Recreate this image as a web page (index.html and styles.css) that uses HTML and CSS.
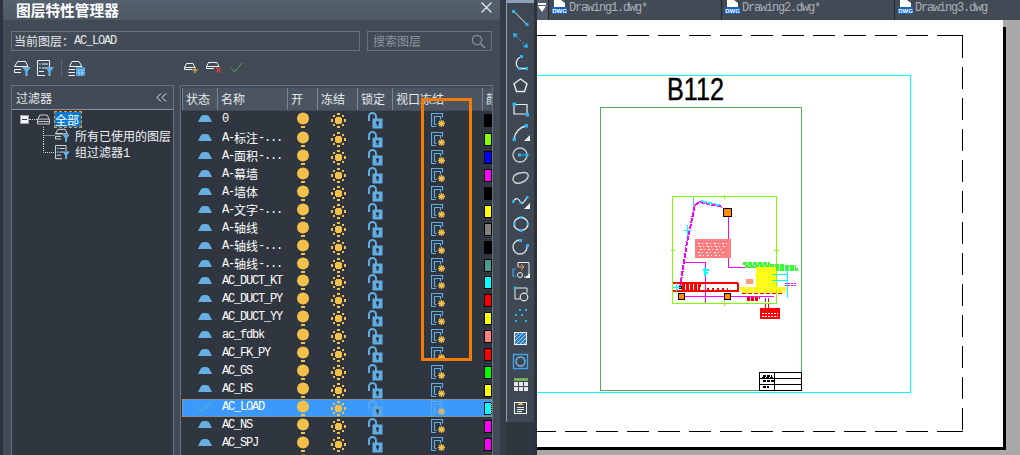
FILE: index.html
```html
<!DOCTYPE html>
<html lang="zh-CN">
<head>
<meta charset="utf-8">
<title>图层特性管理器</title>
<link rel="stylesheet" href="styles.css">
</head>
<body>
<svg class="defs" width="0" height="0" aria-hidden="true">
  <symbol id="dome" viewBox="0 0 16 9"><path d="M1 8 L3 4 Q4 1 7 1 H9 Q12 1 13 4 L15 8Z" fill="#67aee3"/></symbol>
  <symbol id="bulb" viewBox="0 0 14 17"><circle cx="7" cy="6.500" r="6" fill="#f3c04c"/><rect x="5" y="14" width="4" height="2" fill="#f3c04c"/></symbol>
  <symbol id="sun" viewBox="0 0 15 15" shape-rendering="crispEdges"><g fill="#f3c04c"><rect x="5" y="4" width="5" height="7"/><rect x="4" y="5" width="7" height="5"/><rect x="6" y="0" width="3" height="2"/><rect x="6" y="13" width="3" height="2"/><rect x="0" y="6" width="2" height="3"/><rect x="13" y="6" width="2" height="3"/><rect x="2" y="2" width="2" height="2"/><rect x="11" y="2" width="2" height="2"/><rect x="2" y="11" width="2" height="2"/><rect x="11" y="11" width="2" height="2"/></g></symbol>
  <symbol id="lock" viewBox="0 0 15 17"><path d="M1 9 V4.500 A3.500 3.500 0 0 1 8 4.500 V7" fill="none" stroke="#62aee2" stroke-width="2"/><rect x="4.500" y="6.500" width="10" height="10" fill="#62aee2"/><circle cx="9.500" cy="10.500" r="1.600" fill="#2f3640"/><rect x="8.800" y="11" width="1.500" height="3" fill="#2f3640"/></symbol>
  <symbol id="vp" viewBox="0 0 14 15"><path d="M.5 13.500 V.5 H11.500 V4.500 M.5 13.500 H5 M3.500 11.500 V3.500 H9.500 V6.500 M3.500 11.500 H5.500" fill="none" stroke="#62aee2" stroke-width="1.200"/><g stroke="#f3c04c" stroke-width="1.300"><path d="M10.500 7 V14 M7 10.500 H14 M8 8 L13 13 M13 8 L8 13"/></g></symbol>
  <symbol id="layer" viewBox="0 0 16 16"><path d="M3.500 2.500 H12.500 L15 7.500 H1Z M.5 7.500 V10.500 H15.500 V7.500 M.5 13.500 H15.500 V10.500 M.5 10.500 V13.500" fill="none" stroke="#f0f2f4" stroke-width="1"/></symbol>
  <symbol id="funnel" viewBox="0 0 8 8"><path d="M0 0 H8 L5 4 V8 H3 V4Z" fill="#67aee3"/></symbol>
  <symbol id="layerf" viewBox="0 0 17 17"><path d="M3.500 1.500 H11.500 L14 6.500 H.5Z M.5 6.500 H8 M.5 9.500 H7 M.5 9.500 V12.500 H7" fill="none" stroke="#f0f2f4"/><use href="#funnel" x="8" y="7" width="9" height="9"/></symbol>
  <symbol id="docf" viewBox="0 0 17 17"><path d="M.5 .5 H12.500 V7 M.5 .5 V15.500 H8" fill="none" stroke="#f0f2f4"/><g fill="#4aa3e8"><rect x="2" y="3" width="2" height="2"/><rect x="2" y="7" width="2" height="2"/></g><path d="M5 4 H11 M5 8 H9 M2 11.500 H7" stroke="#f0f2f4"/><use href="#funnel" x="8" y="7" width="9" height="9"/></symbol>
</svg>

<div class="app">
  <div class="edge"></div>

  <section class="panel">
    <header class="titlebar">
      <h1 class="title">图层特性管理器</h1>
      <svg class="close" width="11" height="11" viewBox="0 0 11 11"><path d="M.5 .5 L10.500 10.500 M10.500 .5 L.5 10.500" stroke="#e8ecef" stroke-width="1.200"/></svg>
    </header>

    <div class="fields">
      <div class="field current">当前图层：<span class="mono">AC_LOAD</span></div>
      <div class="field search">
        <span>搜索图层</span>
        <svg width="15" height="15" viewBox="0 0 15 15"><circle cx="6" cy="6" r="4.700" fill="none" stroke="#7f93a6" stroke-width="1.200"/><path d="M9.500 9.500 L14 14" stroke="#8a96a2" stroke-width="1.500"/></svg>
      </div>
    </div>

    <div class="actions">
      <div class="act-left">
        <svg width="17" height="17"><use href="#layerf"/></svg>
        <svg class="a2" width="17" height="17"><use href="#docf"/></svg>
        <span class="act-sep"></span>
        <svg width="17" height="17" viewBox="0 0 17 17"><path d="M4 1.500 H11 L14 6.500 H1.500Z M.5 9.500 H7 M.5 12.500 H7 M.5 15.500 H7" fill="none" stroke="#f0f2f4"/><rect x="8" y="7" width="9" height="9" fill="#3f96dc"/><path d="M8 10 H17 M8 13 H17 M11 10 V16 M14 10 V16" stroke="#c8e2f6" stroke-width=".7"/></svg>
      </div>
      <div class="act-right">
        <svg width="15" height="11" viewBox="0 0 15 11"><path d="M2.500 1.500 H9 L11 5.500 H.5Z M.5 5.500 V7.500 H8" fill="none" stroke="#f0f2f4"/><path d="M11 5 V11 M8 8 H14" stroke="#e9b949" stroke-width="1.200"/></svg>
        <svg width="17" height="12" viewBox="0 0 17 12"><path d="M2.500 1.500 H11 L13 5.500 H.5Z M.5 5.500 V7.500 H8" fill="none" stroke="#f0f2f4"/><path d="M10 6.500 L15 11.500 M15 6.500 L10 11.500" stroke="#d9433c" stroke-width="1.200"/></svg>
        <svg width="13" height="11" viewBox="0 0 13 11"><path d="M.5 5.500 L4.500 10 L12.500 .5" fill="none" stroke="#4caf50" stroke-width="1"/></svg>
      </div>
    </div>

    <div class="main">
      <aside class="filters">
        <div class="filters-head"><span>过滤器</span>
          <svg width="11" height="9" viewBox="0 0 11 9"><path d="M5 .5 L1 4.500 L5 8.500 M10 .5 L6 4.500 L10 8.500" fill="none" stroke="#e6e9ec"/></svg>
        </div>
        <div class="tree">
          <div class="tree-root">
            <span class="minus"></span><span class="dots"></span>
            <svg width="13" height="13" viewBox="0 0 16 16"><use href="#layer"/></svg>
            <span class="tree-sel">全部</span>
          </div>
          <div class="tree-row">
            <svg class="conn" width="12" height="17" viewBox="0 0 12 17"><path d="M.5 0 V17 M.5 8.500 H12" stroke="#d8dde2" stroke-dasharray="1 1"/></svg>
            <svg width="15" height="15"><use href="#layerf"/></svg><span class="tree-label">所有已使用的图层</span>
          </div>
          <div class="tree-row">
            <svg class="conn" width="12" height="17" viewBox="0 0 12 17"><path d="M.5 0 V8.500 H12" fill="none" stroke="#d8dde2" stroke-dasharray="1 1"/></svg>
            <svg width="15" height="15"><use href="#docf"/></svg><span class="tree-label">组过滤器<span class="mono">1</span></span>
          </div>
        </div>
      </aside>

      <div class="list">
        <div class="row head">
          <div class="h">状态</div><div class="h">名称</div><div class="h">开</div><div class="h">冻结</div><div class="h">锁定</div><div class="h">视口冻结</div><div class="h">颜</div>
        </div>
        <div class="row"><div class="c st"><svg width="16" height="9"><use href="#dome"/></svg></div><div class="c nm">0</div><div class="c mid"><svg width="14" height="17"><use href="#bulb"/></svg></div><div class="c mid"><svg width="15" height="15"><use href="#sun"/></svg></div><div class="c mid"><svg width="15" height="17"><use href="#lock"/></svg></div><div class="c vp"><svg width="14" height="15"><use href="#vp"/></svg></div><div class="c sw"><span class="swatch black"></span></div></div>
        <div class="row"><div class="c st"><svg width="16" height="9"><use href="#dome"/></svg></div><div class="c nm">A-<span class="cn">标注</span>-...</div><div class="c mid"><svg width="14" height="17"><use href="#bulb"/></svg></div><div class="c mid"><svg width="15" height="15"><use href="#sun"/></svg></div><div class="c mid"><svg width="15" height="17"><use href="#lock"/></svg></div><div class="c vp"><svg width="14" height="15"><use href="#vp"/></svg></div><div class="c sw"><span class="swatch lime"></span></div></div>
        <div class="row"><div class="c st"><svg width="16" height="9"><use href="#dome"/></svg></div><div class="c nm">A-<span class="cn">面积</span>-...</div><div class="c mid"><svg width="14" height="17"><use href="#bulb"/></svg></div><div class="c mid"><svg width="15" height="15"><use href="#sun"/></svg></div><div class="c mid"><svg width="15" height="17"><use href="#lock"/></svg></div><div class="c vp"><svg width="14" height="15"><use href="#vp"/></svg></div><div class="c sw"><span class="swatch blue"></span></div></div>
        <div class="row"><div class="c st"><svg width="16" height="9"><use href="#dome"/></svg></div><div class="c nm">A-<span class="cn">幕墙</span></div><div class="c mid"><svg width="14" height="17"><use href="#bulb"/></svg></div><div class="c mid"><svg width="15" height="15"><use href="#sun"/></svg></div><div class="c mid"><svg width="15" height="17"><use href="#lock"/></svg></div><div class="c vp"><svg width="14" height="15"><use href="#vp"/></svg></div><div class="c sw"><span class="swatch magenta"></span></div></div>
        <div class="row"><div class="c st"><svg width="16" height="9"><use href="#dome"/></svg></div><div class="c nm">A-<span class="cn">墙体</span></div><div class="c mid"><svg width="14" height="17"><use href="#bulb"/></svg></div><div class="c mid"><svg width="15" height="15"><use href="#sun"/></svg></div><div class="c mid"><svg width="15" height="17"><use href="#lock"/></svg></div><div class="c vp"><svg width="14" height="15"><use href="#vp"/></svg></div><div class="c sw"><span class="swatch black"></span></div></div>
        <div class="row"><div class="c st"><svg width="16" height="9"><use href="#dome"/></svg></div><div class="c nm">A-<span class="cn">文字</span>-...</div><div class="c mid"><svg width="14" height="17"><use href="#bulb"/></svg></div><div class="c mid"><svg width="15" height="15"><use href="#sun"/></svg></div><div class="c mid"><svg width="15" height="17"><use href="#lock"/></svg></div><div class="c vp"><svg width="14" height="15"><use href="#vp"/></svg></div><div class="c sw"><span class="swatch yellow"></span></div></div>
        <div class="row"><div class="c st"><svg width="16" height="9"><use href="#dome"/></svg></div><div class="c nm">A-<span class="cn">轴线</span></div><div class="c mid"><svg width="14" height="17"><use href="#bulb"/></svg></div><div class="c mid"><svg width="15" height="15"><use href="#sun"/></svg></div><div class="c mid"><svg width="15" height="17"><use href="#lock"/></svg></div><div class="c vp"><svg width="14" height="15"><use href="#vp"/></svg></div><div class="c sw"><span class="swatch gray"></span></div></div>
        <div class="row"><div class="c st"><svg width="16" height="9"><use href="#dome"/></svg></div><div class="c nm">A-<span class="cn">轴线</span>-...</div><div class="c mid"><svg width="14" height="17"><use href="#bulb"/></svg></div><div class="c mid"><svg width="15" height="15"><use href="#sun"/></svg></div><div class="c mid"><svg width="15" height="17"><use href="#lock"/></svg></div><div class="c vp"><svg width="14" height="15"><use href="#vp"/></svg></div><div class="c sw"><span class="swatch black"></span></div></div>
        <div class="row"><div class="c st"><svg width="16" height="9"><use href="#dome"/></svg></div><div class="c nm">A-<span class="cn">轴线</span>-...</div><div class="c mid"><svg width="14" height="17"><use href="#bulb"/></svg></div><div class="c mid"><svg width="15" height="15"><use href="#sun"/></svg></div><div class="c mid"><svg width="15" height="17"><use href="#lock"/></svg></div><div class="c vp"><svg width="14" height="15"><use href="#vp"/></svg></div><div class="c sw"><span class="swatch teal"></span></div></div>
        <div class="row"><div class="c st"><svg width="16" height="9"><use href="#dome"/></svg></div><div class="c nm">AC_DUCT_KT</div><div class="c mid"><svg width="14" height="17"><use href="#bulb"/></svg></div><div class="c mid"><svg width="15" height="15"><use href="#sun"/></svg></div><div class="c mid"><svg width="15" height="17"><use href="#lock"/></svg></div><div class="c vp"><svg width="14" height="15"><use href="#vp"/></svg></div><div class="c sw"><span class="swatch cyan"></span></div></div>
        <div class="row"><div class="c st"><svg width="16" height="9"><use href="#dome"/></svg></div><div class="c nm">AC_DUCT_PY</div><div class="c mid"><svg width="14" height="17"><use href="#bulb"/></svg></div><div class="c mid"><svg width="15" height="15"><use href="#sun"/></svg></div><div class="c mid"><svg width="15" height="17"><use href="#lock"/></svg></div><div class="c vp"><svg width="14" height="15"><use href="#vp"/></svg></div><div class="c sw"><span class="swatch red"></span></div></div>
        <div class="row"><div class="c st"><svg width="16" height="9"><use href="#dome"/></svg></div><div class="c nm">AC_DUCT_YY</div><div class="c mid"><svg width="14" height="17"><use href="#bulb"/></svg></div><div class="c mid"><svg width="15" height="15"><use href="#sun"/></svg></div><div class="c mid"><svg width="15" height="17"><use href="#lock"/></svg></div><div class="c vp"><svg width="14" height="15"><use href="#vp"/></svg></div><div class="c sw"><span class="swatch yellow"></span></div></div>
        <div class="row"><div class="c st"><svg width="16" height="9"><use href="#dome"/></svg></div><div class="c nm">ac_fdbk</div><div class="c mid"><svg width="14" height="17"><use href="#bulb"/></svg></div><div class="c mid"><svg width="15" height="15"><use href="#sun"/></svg></div><div class="c mid"><svg width="15" height="17"><use href="#lock"/></svg></div><div class="c vp"><svg width="14" height="15"><use href="#vp"/></svg></div><div class="c sw"><span class="swatch salmon"></span></div></div>
        <div class="row"><div class="c st"><svg width="16" height="9"><use href="#dome"/></svg></div><div class="c nm">AC_FK_PY</div><div class="c mid"><svg width="14" height="17"><use href="#bulb"/></svg></div><div class="c mid"><svg width="15" height="15"><use href="#sun"/></svg></div><div class="c mid"><svg width="15" height="17"><use href="#lock"/></svg></div><div class="c vp"><svg width="14" height="15"><use href="#vp"/></svg></div><div class="c sw"><span class="swatch red"></span></div></div>
        <div class="row"><div class="c st"><svg width="16" height="9"><use href="#dome"/></svg></div><div class="c nm">AC_GS</div><div class="c mid"><svg width="14" height="17"><use href="#bulb"/></svg></div><div class="c mid"><svg width="15" height="15"><use href="#sun"/></svg></div><div class="c mid"><svg width="15" height="17"><use href="#lock"/></svg></div><div class="c vp"><svg width="14" height="15"><use href="#vp"/></svg></div><div class="c sw"><span class="swatch green"></span></div></div>
        <div class="row"><div class="c st"><svg width="16" height="9"><use href="#dome"/></svg></div><div class="c nm">AC_HS</div><div class="c mid"><svg width="14" height="17"><use href="#bulb"/></svg></div><div class="c mid"><svg width="15" height="15"><use href="#sun"/></svg></div><div class="c mid"><svg width="15" height="17"><use href="#lock"/></svg></div><div class="c vp"><svg width="14" height="15"><use href="#vp"/></svg></div><div class="c sw"><span class="swatch yellow"></span></div></div>
        <div class="row selected"><div class="c st"><svg width="16" height="11" viewBox="0 0 16 11"><path d="M.5 6 L4.500 10.500 L14.500 .5" fill="none" stroke="#5fc08a"/></svg></div><div class="c nm">AC_LOAD</div><div class="c mid"><svg width="14" height="17"><use href="#bulb"/></svg></div><div class="c mid"><svg width="15" height="15"><use href="#sun"/></svg></div><div class="c mid"><svg class="faded" width="15" height="17"><use href="#lock"/></svg></div><div class="c vp"><svg class="faded" width="14" height="15"><use href="#vp"/></svg></div><div class="c sw"><span class="swatch cyan"></span></div></div>
        <div class="row"><div class="c st"><svg width="16" height="9"><use href="#dome"/></svg></div><div class="c nm">AC_NS</div><div class="c mid"><svg width="14" height="17"><use href="#bulb"/></svg></div><div class="c mid"><svg width="15" height="15"><use href="#sun"/></svg></div><div class="c mid"><svg width="15" height="17"><use href="#lock"/></svg></div><div class="c vp"><svg width="14" height="15"><use href="#vp"/></svg></div><div class="c sw"><span class="swatch magenta"></span></div></div>
        <div class="row"><div class="c st"><svg width="16" height="9"><use href="#dome"/></svg></div><div class="c nm">AC_SPJ</div><div class="c mid"><svg width="14" height="17"><use href="#bulb"/></svg></div><div class="c mid"><svg width="15" height="15"><use href="#sun"/></svg></div><div class="c mid"><svg width="15" height="17"><use href="#lock"/></svg></div><div class="c vp"><svg width="14" height="15"><use href="#vp"/></svg></div><div class="c sw"><span class="swatch magenta"></span></div></div>
        <div class="row"><div class="c st"></div><div class="c nm"></div><div class="c mid"><svg width="14" height="17"><use href="#bulb"/></svg></div><div class="c mid"><svg width="15" height="15"><use href="#sun"/></svg></div><div class="c mid"></div><div class="c vp"></div><div class="c sw"></div></div>
      </div>
    </div>
    <div class="highlight"></div>
  </section>

  <div class="gutter"></div>

  <div class="toolcol">
    <nav class="tools">
      <div class="tool"><svg width="22" height="22"><path d="M4 5.500 L17 18.500" stroke="#e8ecef"/><path d="M2 4h3v3h-3z M15.500 17h3v3h-3z" fill="#29b6f6"/></svg></div>
      <div class="tool"><svg width="22" height="22"><path d="M3 4 L18 19" stroke="#29b6f6" stroke-dasharray="2 2.500"/><path d="M3 4 L8 5 L4 9Z M18 19 L13 18 L17 14Z" fill="#29b6f6"/></svg></div>
      <div class="tool"><svg width="22" height="22"><path d="M11 5 A6.500 6.500 0 0 0 9 16.500 H16" fill="none" stroke="#e8ecef" stroke-width="1.300"/><path d="M10 3h3v3h-3z M8 15h3v3h-3z M15 15h3v3h-3z" fill="#29b6f6"/></svg></div>
      <div class="tool"><svg width="22" height="22"><path d="M10.500 4 L17 8.700 L14.500 16.500 H6.500 L4 8.700Z" fill="none" stroke="#e8ecef" stroke-width="1.400"/></svg></div>
      <div class="tool"><svg width="22" height="22"><path d="M4 6.500 H17 V16 H4 V6.500" fill="none" stroke="#e8ecef" stroke-width="1.200"/><path d="M2.500 4.500h3.500v3.500h-3.500z M15.500 15h3.500v3.500h-3.500z" fill="#29b6f6"/></svg></div>
      <div class="tool"><svg width="22" height="22"><path d="M4 18 C5 11 10 6 16 5" fill="none" stroke="#e8ecef" stroke-width="1.300"/><path d="M2.500 16.500h3.500v3.500h-3.500z M14.500 3h3.500v3.500h-3.500z" fill="#29b6f6"/><path d="M20 14 V20 H14Z" fill="#f0f2f4"/></svg></div>
      <div class="tool"><svg width="22" height="22"><circle cx="10" cy="11" r="7" fill="none" stroke="#c8ced4" stroke-width="1.300"/><path d="M10 11 H18" stroke="#29b6f6"/><path d="M8 9.500h3v3h-3z M15.500 9.500h3v3h-3z" fill="#29b6f6"/></svg></div>
      <div class="tool"><svg width="22" height="22"><path d="M3 12 C3 8 8 6 13 5.500 C17 5 19 7 18 10 C17 13 14 15 10 16 C6 17 3 15 3 12Z" fill="none" stroke="#c8ced4" stroke-width="1.500"/></svg></div>
      <div class="tool"><svg width="22" height="22"><path d="M3 12 C6 6 9 9 11 13 C13 15 16 8 18 7" fill="none" stroke="#e8ecef" stroke-width="1.200"/><path d="M2 10.500h2.500v2.500h-2.500z M9.500 11h2.500v2.500h-2.500z M16 6h2.500v2.500h-2.500z" fill="#29b6f6"/><path d="M20 13 V19 H14Z" fill="#f0f2f4"/></svg></div>
      <div class="tool"><svg width="22" height="22"><ellipse cx="11" cy="11" rx="7" ry="6.500" fill="none" stroke="#e8ecef" stroke-width="1.400"/><path d="M9.500 3h3v3h-3z M3 9.500h2.500v2.500h-2.500z M16.500 9.500h2.500v2.500h-2.500z M9.500 16h3v3h-3z" fill="#29b6f6"/></svg></div>
      <div class="tool"><svg width="22" height="22"><path d="M10 4 A7 7 0 1 0 17 11" fill="none" stroke="#d4d9de" stroke-width="1.400"/><path d="M9 3h3v3h-3z M16 8h3v3h-3z" fill="#29b6f6"/></svg></div>
      <div class="tool"><svg width="22" height="22"><path d="M8 8 V3.500 H19 V18 H14" fill="none" stroke="#e8ecef"/><path d="M3 10 H6 M3 10 V17 H6" fill="none" stroke="#3da5f0" stroke-width="1.200"/><path d="M8 8 H14 M11 5 L14 8 L11 11" fill="none" stroke="#e9a23b"/><circle cx="10" cy="16" r="2.500" fill="none" stroke="#e8ecef"/><path d="M20 14 V19 H15Z" fill="#f0f2f4"/></svg></div>
      <div class="tool"><svg width="22" height="22"><path d="M5 6 V17 H10 M5 6 H17 V11" fill="none" stroke="#e8ecef"/><path d="M3.500 4.500h2.500v2.500h-2.500z" fill="#29b6f6"/><circle cx="14" cy="15" r="3.800" fill="none" stroke="#e8ecef" stroke-width="1.200"/></svg></div>
      <div class="tool"><svg width="22" height="22"><path d="M9 4h2v2h-2z M5 9h2v2h-2z M11 9h2v2h-2z M5 15h2v2h-2z M15 15h2v2h-2z M15 4h2v2h-2z" fill="#29b6f6"/></svg></div>
      <div class="tool"><svg width="22" height="22"><rect x="5" y="5" width="12" height="12" fill="#2f7fc2"/><path d="M5 9 L9 5 M5 13 L13 5 M5 17 L17 5 M9 17 L17 9 M13 17 L17 13" stroke="#a9d3ef"/><rect x="4.500" y="4.500" width="12" height="12" fill="none" stroke="#f0f2f4"/></svg></div>
      <div class="tool"><svg width="22" height="22"><rect x="3.500" y="3.500" width="14" height="14" fill="none" stroke="#3da5f0" stroke-width="1.400"/><circle cx="10.500" cy="10.500" r="4.500" fill="none" stroke="#6cb8ee" stroke-width="1.400"/></svg></div>
      <div class="tool"><svg width="22" height="22" shape-rendering="crispEdges"><rect x="4" y="4" width="14" height="3" fill="#6fae5d"/><g fill="#e6e6e6"><rect x="4" y="8" width="4" height="4"/><rect x="9" y="8" width="4" height="4"/><rect x="14" y="8" width="4" height="4"/><rect x="4" y="13" width="4" height="4"/><rect x="9" y="13" width="4" height="4"/><rect x="14" y="13" width="4" height="4"/></g></svg></div>
      <div class="tool"><svg width="22" height="22"><rect x="4.500" y="5.500" width="12" height="11" fill="#3f4752" stroke="#f0f2f4"/><path d="M7 8 L10.500 5.500 L14 8Z" fill="#e9c24b"/><path d="M7 10.500 H14 M7 12.500 H14 M7 14.500 H12" stroke="#e8ecef"/></svg></div>
    </nav>
    <div class="tool-foot"></div>
  </div>

  <div class="edge2"></div>

  <main class="doc">
    <div class="tabs">
      <div class="tab-menu"><svg width="8" height="9" viewBox="0 0 8 9"><path d="M0 0 H8 V2 H0Z M0 3 H8 L4 9Z" fill="#fff"/></svg></div>
      <div class="tab"><svg width="15" height="15" viewBox="0 0 15 15"><path d="M2 0 H9 L13 3 V14 H2Z" fill="#fff"/><rect y="7" width="15" height="7" fill="#1565c0"/><text x="7.500" y="13" class="dwg">DWG</text></svg><span>Drawing1.dwg*</span></div>
      <div class="tab"><svg width="15" height="15" viewBox="0 0 15 15"><path d="M2 0 H9 L13 3 V14 H2Z" fill="#fff"/><rect y="7" width="15" height="7" fill="#1565c0"/><text x="7.500" y="13" class="dwg">DWG</text></svg><span>Drawing2.dwg*</span></div>
      <div class="tab"><svg width="15" height="15" viewBox="0 0 15 15"><path d="M2 0 H9 L13 3 V14 H2Z" fill="#fff"/><rect y="7" width="15" height="7" fill="#1565c0"/><text x="7.500" y="13" class="dwg">DWG</text></svg><span>Drawing3.dwg</span></div>
    </div>
    <svg class="sheet" width="483" height="435" viewBox="537 20 483 435">
      <rect x="537" y="20" width="483" height="435" fill="#a8a8a8"/>
      <rect x="537" y="20" width="466" height="427" fill="#fff"/>
      <path d="M1003 27 H1006 V450 H537 V447 H1003Z" fill="#000"/>
      <g fill="none" shape-rendering="crispEdges">
        <path d="M959 35.500 H537 M962 35.500 H959 M962.500 35 V36 M962.500 36 V430 M959 431.500 H537 M963 431.500 H959" stroke="#000" stroke-dasharray="22 9"/>
        <path d="M537 75.500 H910.500 V392.500 H537" stroke="#00ffff"/>
        <rect x="600.500" y="107.500" width="201" height="283" stroke="#54b058"/>
        <rect x="759.500" y="372.500" width="42" height="18" stroke="#000"/>
        <path d="M759 378.500 H801 M759 384.500 H801 M774.500 372 V390" stroke="#000"/>
        <path d="M763 375.500 H772 M762 378 H773 M763 381 H775 M763 387 H769" stroke="#000" stroke-width="2" stroke-dasharray="3 1"/>
      </g>
      <text class="heading" x="667" y="100" textLength="57" lengthAdjust="spacingAndGlyphs">B112</text>

      <g fill="none" shape-rendering="crispEdges">
        <rect x="672.500" y="196.500" width="104" height="107" stroke="#80ff00"/>
        <path d="M724 195 V199 M724 301 V306 M671 250 H675 M774 250 H779" stroke="#80ff00"/>
        <path d="M694 197 L693 212" stroke="#66bbee"/>
        <path d="M680 288 L687 242 L695 205 L700 202 L723 207" stroke="#ff00ff" stroke-width="2" stroke-dasharray="5 1"/>
        <path d="M701 201 L722 206" stroke="#00ffff" stroke-width="2" stroke-dasharray="5 2"/>
        <path d="M728.500 217 V267 H757" stroke="#ff00ff"/>
        <rect x="695" y="239" width="36" height="19" fill="#ff8080"/>
        <path d="M698 243 H728 M699 246 H727 M700 249 H724 M698 252 H726 M699 255 H720" stroke="#fff" stroke-dasharray="2 2 1 3"/>
        <path d="M683 262.500 H705.500 V303" stroke="#ff00ff"/>
        <path d="M703 270 H709 M704 273 H708 M705 268 V276" stroke="#00ffff" stroke-width="2"/>
        <path d="M687 225 V236 M684 230 H691" stroke="#00ffff"/>
        <path d="M673 283 H738 M673 291 H738 M737.500 283 V292" stroke="#ff0000" stroke-width="2"/>
        <path d="M682 285.500 H702 M682 288 H700" stroke="#ff0000" stroke-width="3" stroke-dasharray="3 1"/>
        <path d="M707 289 H728" stroke="#ff0000" stroke-width="2" stroke-dasharray="2 3"/>
        <rect x="679" y="286" width="3" height="3" fill="#000"/>
        <path d="M680 296.500 H774 " stroke="#ff00ff"/>
        <path d="M673 287 H681 M676 283 V293" stroke="#00ffff"/>
        <rect x="678.500" y="293.500" width="6" height="6" fill="#ff8c00" stroke="#000"/>
        <rect x="724.500" y="293.500" width="6" height="6" fill="#ff8c00" stroke="#000"/>
        <rect x="723.500" y="208.500" width="8" height="8" fill="#ff8c00" stroke="#000"/>
        <path d="M743 263 H770 M770 265 H785 M745 266 H796 M775 269 H798" stroke="#33ff33" stroke-width="3" stroke-dasharray="4 1"/>
        <rect x="756" y="267" width="20" height="22" fill="#ffff00"/>
        <path d="M758 270 H774 M758 274 H774 M758 278 H774 M758 282 H774 M758 286 H774" stroke="#fff" stroke-dasharray="1 3"/>
        <path d="M740 288 H786 M742 291 H785" stroke="#ffff00" stroke-width="3" stroke-dasharray="6 1"/>
        <rect x="746" y="279" width="7" height="5" fill="#ff9a80"/>
        <path d="M787.500 268 V298" stroke="#00ffff"/>
        <path d="M772 274 H787 M772 280 H787" stroke="#00ffff"/>
        <path d="M785 283 H797 M785 285 H796" stroke="#ff00ff" stroke-dasharray="2 1"/>
        <path d="M747 298 H760 M747 300 H759" stroke="#ff0000" stroke-width="2" stroke-dasharray="3 1"/>
        <path d="M765.500 298 V308 M768.500 298 V308 M742 293 H782" stroke="#ff0000" stroke-dasharray="4 2"/>
        <rect x="760" y="308" width="20" height="11" fill="#ff0000"/>
        <path d="M762 313 H778 M762 316 H778" stroke="#fff" stroke-dasharray="2 1"/>
      </g>
    </svg>
  </main>
</div>
</body>
</html>
```

FILE: styles.css
```css
* { box-sizing: border-box; }
html, body { margin: 0; height: 100%; overflow: hidden; }
body { background: #2f3640; font-family: "Noto Sans CJK SC", "Liberation Sans", sans-serif; font-size: 12px; color: #eef1f3; }
svg { display: block; flex: none; }
.defs { position: absolute; }
.mono { font-family: "Liberation Mono", "Noto Sans CJK SC", monospace; font-size: 12px; letter-spacing: -1.200px; }

.app { display: flex; width: 1020px; height: 455px; overflow: hidden; }
.edge { width: 3px; background: #2c333c; }

.panel { position: relative; width: 497px; background: #414a55; display: flex; flex-direction: column; }
.titlebar { height: 20px; display: flex; align-items: center; justify-content: space-between; padding: 0 8px 0 13px; background: linear-gradient(#56626f, #4d5864); }
.title { margin: 0; font-size: 14.700px; line-height: 20px; font-weight: 700; color: #fff; }
.close { position: relative; top: -3px; }

.fields { display: flex; gap: 7px; padding: 11px 8px 0 8px; }
.field { height: 20px; border: 1px solid #68727c; line-height: 16px; display: flex; align-items: center; white-space: pre; }
.current { width: 349px; padding-left: 2px; color: #e6e9ec; }
.search { width: 125px; padding: 0 5px; justify-content: space-between; color: #8b939b; }

.actions { height: 34px; display: flex; align-items: center; padding-left: 11px; }
.act-left { display: flex; align-items: center; width: 170px; }
.a2 { margin-left: 6px; }
.act-sep { width: 1px; height: 18px; background: #1f252c; border-right: 1px solid #5a6470; margin: 0 6px 0 7px; }
.act-right { display: flex; align-items: center; gap: 7px; position: relative; top: -1px; }

.main { flex: 1; min-height: 0; display: flex; gap: 6px; padding-left: 8px; }
.filters { width: 163px; height: 400px; border: 1px solid #68727c; background: #2f3640; }
.filters-head { height: 24px; background: #414a55; border-bottom: 1px solid #8b949c; display: flex; align-items: center; justify-content: space-between; padding: 0 6px 0 4px; color: #e6e9ec; }
.tree { padding: 1px 0 0 8px; }
.tree-root { height: 16px; display: flex; align-items: center; }
.minus { width: 9px; height: 9px; background: linear-gradient(#2f3640, #2f3640) center / 5px 1px no-repeat #f4f5f6; border: 1px solid #9aa0a6; }
.dots { width: 8px; border-top: 1px dotted #d8dde2; }
.tree-root svg { margin-right: 5px; }
.tree-sel { background: #0a78d4; color: #fff; outline: 1px dashed #f59a23; width: 26px; line-height: 15px; height: 15px; }
.tree-row { height: 17px; display: flex; align-items: center; padding-left: 23px; }
.tree-label { margin-left: 5px; color: #eef1f3; line-height: 17px; white-space: nowrap; }

.list { width: 313px; height: 372px; border: 1px solid #68727c; border-bottom: 0; padding-left: 1px; background: #2f3640; overflow: hidden; }
.row { display: grid; grid-template-columns: 35px 70px 30px 40px 35px 90px 10px; height: 18px; }
.head { height: 25px; padding-top: 1px; background: #414a55; border-top: 1px solid #414a55; }
.h { padding-left: 3px; line-height: 22px; height: 22px; border-left: 1px solid #7d868e; background: #4a5561; color: #e6e9ec; white-space: nowrap; overflow: hidden; }
.c { display: flex; align-items: center; min-width: 0; }
.st { padding: 0 0 3px 15px; }
.nm { padding: 0 0 3px 5px; font-family: "Liberation Mono", "Noto Sans CJK SC", monospace; font-size: 12px; letter-spacing: -1.200px; color: #fff; white-space: pre; }
.cn { font-family: "Noto Sans CJK SC", sans-serif; font-size: 12px; letter-spacing: 0; }
.mid { justify-content: center; }
.row .c:nth-child(3), .row .c:nth-child(4) { padding-left: 2px; }
.row .c:nth-child(5) { padding-left: 1px; }
.vp { padding-left: 39px; }
.sw { padding-left: 2px; }
.swatch { display: block; flex: none; width: 8px; height: 13px; border: 1px solid #000; }
.black { background: #000; }
.lime { background: #80ff00; }
.blue { background: #0000ff; }
.magenta { background: #ff00ff; }
.yellow { background: #ffff00; }
.gray { background: #808080; }
.teal { background: #4c9a8f; }
.cyan { background: #00ffff; }
.red { background: #ff0000; }
.salmon { background: #ff7f7f; }
.green { background: #00ff00; }
.selected { background: #3b99fc; outline: 1px dotted #c98a3a; outline-offset: -1px; }
.faded { opacity: .85; }

.highlight { position: absolute; left: 418px; top: 98px; width: 51px; height: 263px; border: 3.500px solid #f57c00; }

.gutter { width: 6px; background: #343b45; }
.toolcol { width: 28px; display: flex; flex-direction: column; }
.tools { height: 422px; background: #3f4752; border-left: 1px solid #8ea0b2; border-top: 3px solid #8ea0b2; padding-top: 2px; }
.tool { height: 23px; display: flex; align-items: center; justify-content: center; }
.tool-foot { flex: 1; background: #2f3640; }
.edge2 { width: 3px; background: #2c333c; }

.doc { flex: 1; min-width: 0; display: flex; flex-direction: column; }
.tabs { height: 20px; background: #414a55; display: flex; overflow: hidden; }
.tab-menu { flex: none; width: 12px; padding: 3px 0 0 1px; background: #525d69; border-right: 1px solid #20262d; }
.tab { flex: none; width: 173px; display: flex; gap: 2px; padding-left: 3px; border-right: 1px solid #20262d; color: #a9afb5; font-family: "Liberation Mono", monospace; font-size: 12px; letter-spacing: -1.200px; line-height: 17px; white-space: pre; }
.dwg { font: 700 6px "Liberation Sans", sans-serif; letter-spacing: 0; fill: #fff; text-anchor: middle; }
.sheet { flex: 1; }
.heading { font-family: "Liberation Sans", sans-serif; font-size: 32px; fill: #000; stroke: #000; stroke-width: .4px; }
```
